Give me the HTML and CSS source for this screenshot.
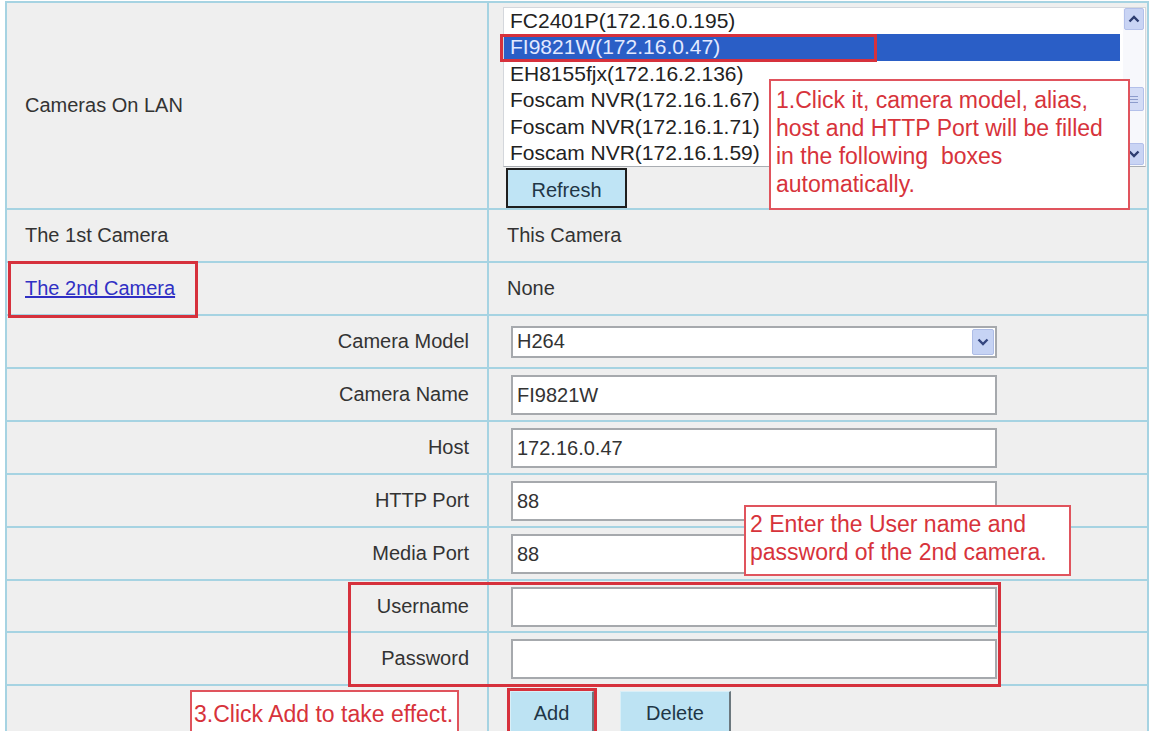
FILE: index.html
```html
<!DOCTYPE html>
<html lang="en">
<head>
    <meta charset="UTF-8">
    <title>Add Camera - Multi-Device</title>
    <link rel="stylesheet" href="styles.css">
</head>
<body>
    <div class="page">
        <table class="cfg">
            <tr class="lan-row">
                <td class="name">Cameras On LAN</td>
                <td class="lan-cell">
                    <div class="listbox">
                        <ul class="items">
                            <li>FC2401P(172.16.0.195)</li>
                            <li class="sel">FI9821W(172.16.0.47)</li>
                            <li>EH8155fjx(172.16.2.136)</li>
                            <li>Foscam NVR(172.16.1.67)</li>
                            <li>Foscam NVR(172.16.1.71)</li>
                            <li>Foscam NVR(172.16.1.59)</li>
                        </ul>
                        <div class="vscroll">
                            <span class="sb-btn sb-up">
                                <svg width="12" height="8" viewBox="0 0 12 8"><path d="M1.5 6.5 L6 2 L10.5 6.5" fill="none" stroke="#2d3d70" stroke-width="2.4"/></svg>
                            </span>
                            <span class="sb-thumb">
                                <svg width="10" height="9" viewBox="0 0 10 9"><path d="M1 1.5 H9 M1 4.5 H9 M1 7.5 H9" stroke="#8c9ccc" stroke-width="1"/></svg>
                            </span>
                            <span class="sb-btn sb-down">
                                <svg width="12" height="8" viewBox="0 0 12 8"><path d="M1.5 1.5 L6 6 L10.5 1.5" fill="none" stroke="#2d3d70" stroke-width="2.4"/></svg>
                            </span>
                        </div>
                    </div>
                    <button class="btn btn-default">Refresh</button>
                </td>
            </tr>
            <tr>
                <td class="name">The 1st Camera</td>
                <td class="val">This Camera</td>
            </tr>
            <tr>
                <td class="name"><a href="#" class="cam-link">The 2nd Camera</a></td>
                <td class="val">None</td>
            </tr>
            <tr>
                <td class="label">Camera Model</td>
                <td class="val">
                    <div class="select">
                        <span class="select-text">H264</span>
                        <span class="select-drop">
                            <svg width="12" height="8" viewBox="0 0 12 8"><path d="M1.5 1.5 L6 6 L10.5 1.5" fill="none" stroke="#34467f" stroke-width="2.4"/></svg>
                        </span>
                    </div>
                </td>
            </tr>
            <tr>
                <td class="label">Camera Name</td>
                <td class="val"><input class="field" type="text" value="FI9821W"></td>
            </tr>
            <tr>
                <td class="label">Host</td>
                <td class="val"><input class="field" type="text" value="172.16.0.47"></td>
            </tr>
            <tr>
                <td class="label">HTTP Port</td>
                <td class="val"><input class="field" type="text" value="88"></td>
            </tr>
            <tr>
                <td class="label">Media Port</td>
                <td class="val"><input class="field" type="text" value="88"></td>
            </tr>
            <tr class="short">
                <td class="label">Username</td>
                <td class="val"><input class="field" type="text" value=""></td>
            </tr>
            <tr>
                <td class="label">Password</td>
                <td class="val"><input class="field" type="password" value=""></td>
            </tr>
            <tr>
                <td class="label"></td>
                <td class="val">
                    <div class="actions">
                        <button class="btn btn-marked">Add</button>
                        <button class="btn">Delete</button>
                    </div>
                </td>
            </tr>
        </table>

        <!-- tutorial markup drawn over the form -->
        <div class="mark mark-sel"></div>
        <div class="mark mark-link"></div>
        <div class="mark mark-cred"></div>

        <div class="note note-1">1.Click it, camera model, alias,<br>host and HTTP Port will be filled<br>in the following&nbsp; boxes<br>automatically.</div>
        <div class="note note-2">2 Enter the User name and<br>password of the 2nd camera.</div>
        <div class="note note-3">3.Click Add to take effect.</div>
    </div>
</body>
</html>
```

FILE: styles.css
```css
body {
    margin: 0;
    background: #ffffff;
    font-family: "Liberation Sans", Arial, sans-serif;
    overflow: hidden;
}
.page {
    position: relative;
    width: 1153px;
    height: 731px;
}
.cfg {
    margin: 1px 0 0 5px;
    border-collapse: separate;
    border-spacing: 0;
    table-layout: fixed;
    width: 1144px;
    border-top: 2px solid #a6d3e2;
    border-left: 2px solid #a6d3e2;
    background: #efefef;
}
.cfg td {
    box-sizing: border-box;
    height: 53px;
    padding: 0 18px;
    border-right: 2px solid #a6d3e2;
    border-bottom: 2px solid #a6d3e2;
    font-size: 20px;
    color: #333333;
    vertical-align: middle;
    white-space: nowrap;
}
.cfg td:first-child {
    width: 482px;
}
.cfg tr.short td {
    height: 52px;
}
.cfg tr.lan-row td {
    height: 207px;
}
.cfg td.label {
    text-align: right;
}
.cfg td.lan-cell {
    vertical-align: top;
    padding: 4px 0 0 14px;
}
.cam-link {
    color: #3030c4;
    text-decoration: underline;
}

/* list of cameras found on the LAN */
.listbox {
    display: flex;
    width: 643px;
    height: 160px;
    box-sizing: border-box;
    background: #ffffff;
    border: 1px solid #d4d7dc;
    border-bottom-color: #a9adb2;
}
.items {
    flex: 1;
    list-style: none;
    margin: 0;
    padding: 0 3px 0 0;
    font-size: 21px;
    line-height: 26.4px;
    color: #222;
}
.items li {
    padding-left: 6px;
}
.items li.sel {
    background: #2a5ec6;
    color: #e3e9ff;
}
.vscroll {
    width: 21px;
    margin-right: 1px;
    display: flex;
    flex-direction: column;
    align-items: center;
    background: #f7f8fc;
}
.sb-btn,
.sb-thumb {
    box-sizing: border-box;
    width: 20px;
    display: flex;
    align-items: center;
    justify-content: center;
    background: #c9d4f4;
    border: 1px solid #b3c0ea;
    border-radius: 2px;
}
.sb-btn {
    height: 22px;
}
.sb-thumb {
    height: 24px;
    margin-top: 57px;
    background: #d3dcf6;
}
.sb-down {
    margin-top: 32px;
}

.btn {
    box-sizing: border-box;
    height: 42px;
    padding: 4px 0 0 0;
    font-family: "Liberation Sans", Arial, sans-serif;
    font-size: 20px;
    color: #1f3646;
    background: #bde3f3;
    border: 1px solid #d9eff8;
    border-right: 2px solid #6c787e;
    border-bottom: 2px solid #6c787e;
    border-radius: 0;
}
.btn-default {
    display: block;
    width: 121px;
    height: 40px;
    margin: 1px 0 0 3px;
    padding-top: 4px;
    border: 2px solid #1e1e1e;
    background: #bfe4f5;
}

.select {
    display: flex;
    align-items: center;
    box-sizing: border-box;
    width: 486px;
    height: 32px;
    margin-left: 4px;
    background: #ffffff;
    border: 2px solid #a6a9ad;
}
.select-text {
    flex: 1;
    padding-left: 4px;
    color: #333;
}
.select-drop {
    box-sizing: border-box;
    width: 22px;
    height: 26px;
    margin-right: 1px;
    display: flex;
    align-items: center;
    justify-content: center;
    background: #c6d3f4;
    border: 1px solid #aebde6;
    border-radius: 2px;
}
.field {
    display: block;
    box-sizing: border-box;
    width: 486px;
    height: 40px;
    margin: 1px 0 0 4px;
    padding: 0 4px;
    font-family: "Liberation Sans", Arial, sans-serif;
    font-size: 20px;
    color: #333;
    background: #ffffff;
    border: 2px solid #a6a9ad;
    border-radius: 0;
    outline: none;
}
.actions {
    display: flex;
    gap: 26px;
    margin-left: 3px;
}
.actions .btn {
    width: 84px;
}
.actions .btn + .btn {
    width: 111px;
}
.btn-marked {
    outline: 3px solid #d6313c;
}

/* red markers and callouts */
.mark {
    position: absolute;
    box-sizing: border-box;
    border: 3px solid #d6313c;
}
.mark-sel {
    left: 500px;
    top: 33px;
    width: 377px;
    height: 28px;
}
.mark-link {
    left: 8px;
    top: 260px;
    width: 190px;
    height: 57px;
}
.mark-cred {
    left: 348px;
    top: 581px;
    width: 653px;
    height: 105px;
}
.note {
    position: absolute;
    box-sizing: border-box;
    background: #ffffff;
    border: 2px solid #e0545d;
    color: #d7333b;
    font-size: 23px;
    line-height: 28px;
    white-space: nowrap;
}
.note-1 {
    left: 769px;
    top: 78px;
    width: 361px;
    height: 131px;
    padding: 5px 0 0 5px;
}
.note-2 {
    left: 744px;
    top: 504px;
    width: 327px;
    height: 71px;
    padding: 3px 0 0 4px;
}
.note-3 {
    left: 190px;
    top: 689px;
    width: 269px;
    height: 50px;
    padding: 8px 0 0 2px;
}
```
